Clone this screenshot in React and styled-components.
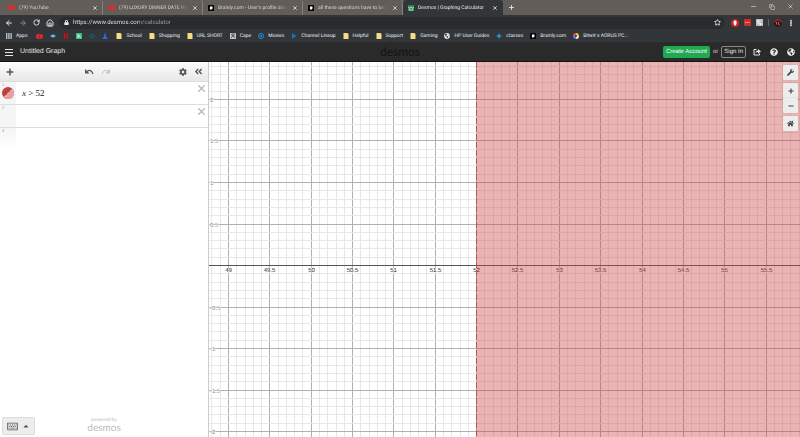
import { useState, useRef, useLayoutEffect } from 'react';
import styled, { createGlobalStyle } from 'styled-components';
import { FaYoutube, FaWrench, FaHome, FaCog, FaLock, FaPlus, FaMinus, FaGlobeAmericas, FaQuestionCircle, FaCaretUp, FaAngleDoubleLeft, FaRegKeyboard } from 'react-icons/fa';
import { ArrowLeft, ArrowRight, RotateCw, House, Star, X, Plus, Minus, Copy, EllipsisVertical } from 'lucide-react';

const tabs = [
    { icon: "youtube", title: "(79) YouTube" },
    { icon: "youtube", title: "(79) LUXURY DINNER DATE NIGH" },
    { icon: "brainly", title: "Brainly.com - User's profile diana" },
    { icon: "brainly", title: "all these questions have to be an" },
    { icon: "desmos", title: "Desmos | Graphing Calculator", active: true },
]

const shortcuts = ["youtube", "eye", "netflix", "hulu", "cloud", "person"]

const bookmarks = [
    { icon: "folder", title: "School" },
    { icon: "folder", title: "Shopping" },
    { icon: "folder", title: "URL SHORT" },
    { icon: "cape", title: "Cape" },
    { icon: "movies", title: "Movies" },
    { icon: "channel", title: "Channel Lineup" },
    { icon: "folder", title: "Helpful" },
    { icon: "folder", title: "Support" },
    { icon: "folder", title: "Gaming" },
    { icon: "globe", title: "HP User Guides" },
    { icon: "classes", title: "classes" },
    { icon: "brainly", title: "Brainly.com" },
    { icon: "google", title: "Bitwit x AORUS PC..." },
]

function SiteIcon({ name }) {
    if (name === "youtube") {
        return <FaYoutube size={7} color="#e8282b" />
    }
    if (name === "globe") {
        return <FaGlobeAmericas size={6} color="#f1f1f1" />
    }
    return (
        <svg width="6" height="6" viewBox="0 0 12 12" aria-hidden="true">
            {name === "brainly" && <>
                <rect width="12" height="12" fill="#050505" />
                <path d="M4 3h5v4L7 9H4z" fill="#fff" />
            </>}
            {name === "desmos" && <>
                <rect width="12" height="12" rx="2" fill="#2f8a55" />
                <path d="M0 3l3 4 3-3 3 3 3-4M1 10h10" fill="none" stroke="#dff5e6" strokeWidth="1.6" />
            </>}
            {name === "folder" && <path d="M1 0h8l2 2v10H1z" fill="#f6dc86" />}
            {name === "eye" && <>
                <path d="M0 6Q6-1 12 6 6 13 0 6z" fill="#2d8fd8" />
                <path d="M3 6h6" stroke="#b9e0ff" strokeWidth="2" />
            </>}
            {name === "netflix" && <path d="M3 12V0l6 12V0" fill="none" stroke="#b8121b" strokeWidth="2.4" />}
            {name === "hulu" && <>
                <rect width="12" height="12" fill="#3dbb85" />
                <path d="M4 2v8M4 6q4-2 4 1v3" fill="none" stroke="#fff" strokeWidth="1.6" />
            </>}
            {name === "cloud" && <path d="M3 9Q0 8 1 5.500 2 4 3.500 4 6 0 9 3.500 12 4 11 7 10.500 9 9 9M6 5v6M4 9l2 2 2-2" fill="none" stroke="#1d7099" strokeWidth="1.4" />}
            {name === "person" && <>
                <circle cx="6" cy="3" r="2.500" fill="#2859c8" />
                <path d="M1 12q0-4 3-4V5h4v3q3 0 3 4z" fill="#2f6ce0" />
            </>}
            {name === "cape" && <>
                <rect width="12" height="12" fill="#c9c9c9" />
                <path d="M2 2h8M4 4h4v3H4zM2 10l2-2M10 10L8 8" fill="none" stroke="#333" strokeWidth="1.4" />
            </>}
            {name === "movies" && <>
                <circle cx="6" cy="6" r="5" fill="none" stroke="#1993dd" strokeWidth="2" />
                <circle cx="6" cy="6" r="2" fill="#1993dd" />
            </>}
            {name === "channel" && <path d="M2 0l9 6-9 6z" fill="#1c6fb5" />}
            {name === "classes" && <path d="M6 0l2 4 4 2-4 2-2 4-2-4-4-2 4-2z" fill="#2a93d5" />}
            {name === "google" && <g fill="none" strokeWidth="4">
                <path d="M2 6a4 4 0 0 1 4-4" stroke="#e9503e" />
                <path d="M6 2a4 4 0 0 1 4 4" stroke="#f5c141" />
                <path d="M10 6a4 4 0 0 1-4 4" stroke="#eee" />
                <path d="M6 10a4 4 0 0 1-4-4" stroke="#4285f4" />
            </g>}
        </svg>
    )
}

function TabStrip() {
    return (
        <Strip>
            {tabs.map( (tab, i) => (
                <Tab key={i} $active={tab.active}>
                    <SiteIcon name={tab.icon} />
                    <TabTitle $active={tab.active}>{tab.title}</TabTitle>
                    <IconButton aria-label="Close tab"><X size={6} strokeWidth={3} /></IconButton>
                </Tab>
            ))}
            <NewTab aria-label="New tab"><Plus size={7} strokeWidth={3} /></NewTab>
            <WindowButtons>
                <IconButton aria-label="Minimize"><Minus size={7} /></IconButton>
                <IconButton aria-label="Restore"><Copy size={6} /></IconButton>
                <IconButton aria-label="Close"><X size={7} /></IconButton>
            </WindowButtons>
        </Strip>
    )
}

function AddressBar() {
    return (
        <Address>
            <Navigation>
                <IconButton aria-label="Back"><ArrowLeft size={8} strokeWidth={3} /></IconButton>
                <IconButton aria-label="Forward" $dim><ArrowRight size={8} strokeWidth={3} /></IconButton>
                <IconButton aria-label="Reload"><RotateCw size={7} strokeWidth={3} /></IconButton>
                <IconButton aria-label="Home"><House size={8} strokeWidth={3} /></IconButton>
            </Navigation>
            <Omnibox>
                <FaLock size={5} />
                <UrlInput aria-label="Address" defaultValue="https://www.desmos.com/calculator" />
                <IconButton aria-label="Bookmark"><Star size={7} strokeWidth={3} /></IconButton>
            </Omnibox>
            <Extensions>
                <svg width="8" height="8" viewBox="0 0 16 16" aria-hidden="true">
                    <path d="M5 0h6l5 5v6l-5 5H5l-5-5V5z" fill="#d8231d" />
                    <path d="M5 8V5h1V3h2v-.5h1V4h2v6l-2 3H7z" fill="#fff" />
                </svg>
                <svg width="7" height="7" viewBox="0 0 14 14" aria-hidden="true">
                    <rect width="14" height="14" fill="#ce2d28" />
                    <path d="M2 7h10" stroke="#f1a09d" strokeWidth="2" strokeDasharray="2.500 1" />
                </svg>
                <svg width="7" height="7" viewBox="0 0 14 14" aria-hidden="true">
                    <rect width="14" height="14" fill="#b9bbbd" />
                    <path d="M2 4h7M2 8h4" stroke="#fff" strokeWidth="2" />
                    <path d="M7 7l5 3-5 3z" fill="#fff" />
                </svg>
                <Divider />
                <svg width="8" height="8" viewBox="0 0 16 16" aria-hidden="true">
                    <circle cx="8" cy="8" r="8" fill="#3b1215" />
                    <path d="M1 6q7-9 14 0" fill="none" stroke="#a62626" strokeWidth="3" />
                    <path d="M5 6v5M9 6v5l3 2" stroke="#b98b82" strokeWidth="1.500" fill="none" />
                </svg>
                <IconButton aria-label="Menu"><EllipsisVertical size={8} strokeWidth={4} /></IconButton>
            </Extensions>
        </Address>
    )
}

function Bookmarks() {
    return (
        <BookmarkBar>
            <Bookmark href="#">
                <svg width="6" height="6" viewBox="0 0 6 6" aria-hidden="true">
                    <path d="M0 1h6M0 3h6M0 5h6" stroke="#e8eaed" strokeWidth="1.300" strokeDasharray="1.400 .8" />
                </svg>
                Apps
            </Bookmark>
            <Shortcuts>
                {shortcuts.map( name => <Bookmark key={name} href="#" aria-label={name}><SiteIcon name={name} /></Bookmark>)}
            </Shortcuts>
            {bookmarks.map( item => (
                <Bookmark key={item.title} href="#">
                    <SiteIcon name={item.icon} />
                    {item.title}
                </Bookmark>
            ))}
        </BookmarkBar>
    )
}

function Header() {
    return (
        <HeaderBar>
            <HeaderSide>
                <IconButton aria-label="Open menu">
                    <svg width="8" height="8" viewBox="0 0 8 8">
                        <path d="M0 1.500h8M0 4.500h8M0 7.500h8" stroke="#e6e6e6" strokeWidth="1" />
                    </svg>
                </IconButton>
                <GraphTitle>Untitled Graph</GraphTitle>
            </HeaderSide>
            <Logo>desmos</Logo>
            <HeaderSide $end>
                <CreateAccount>Create Account</CreateAccount>
                <Or>or</Or>
                <SignIn>Sign In</SignIn>
                <HeaderIcons>
                    <IconButton aria-label="Share">
                        <svg width="8" height="8" viewBox="0 0 16 16">
                            <path d="M7 3H2v11h11v-3" fill="none" stroke="#e6e6e6" strokeWidth="2" />
                            <path d="M5 10q0-5 5-5V2l6 5-6 4V8q-3 0-5 2z" fill="#e6e6e6" />
                        </svg>
                    </IconButton>
                    <IconButton aria-label="Help"><FaQuestionCircle size={8} /></IconButton>
                    <IconButton aria-label="Language"><FaGlobeAmericas size={8} /></IconButton>
                </HeaderIcons>
            </HeaderSide>
        </HeaderBar>
    )
}

function Expressions() {
    return (
        <Panel>
            <PanelBar>
                <ToolButton aria-label="Add item"><FaPlus size={8} /></ToolButton>
                <History>
                    <ToolButton aria-label="Undo">
                        <svg width="9" height="8" viewBox="0 0 18 16">
                            <path d="M4 7Q12 1 16 12" fill="none" stroke="#555" strokeWidth="2.500" />
                            <path d="M0 2v9h9z" fill="#555" />
                        </svg>
                    </ToolButton>
                    <ToolButton aria-label="Redo">
                        <svg width="9" height="8" viewBox="0 0 18 16">
                            <path d="M14 7Q6 1 2 12" fill="none" stroke="#c4c4c4" strokeWidth="2" />
                            <path d="M18 2v9H9z" fill="#c4c4c4" />
                        </svg>
                    </ToolButton>
                </History>
                <ToolGroup>
                    <ToolButton aria-label="Edit list"><FaCog size={8} /></ToolButton>
                    <ToolButton aria-label="Hide list"><FaAngleDoubleLeft size={9} /></ToolButton>
                </ToolGroup>
            </PanelBar>
            <Row>
                <RowNumber>
                    1
                    <svg width="12" height="12" viewBox="0 0 24 24" aria-hidden="true">
                        <circle cx="12" cy="12" r="12" fill="#c0403d" />
                        <path d="M21 4A12 12 0 0 1 4 21z" fill="#e3a09e" />
                        <path d="M5 20L20 5" stroke="#fff" strokeWidth="2" strokeDasharray="5 3" />
                    </svg>
                </RowNumber>
                <Expression>
                    <MathText><i>x</i> &gt; 52</MathText>
                    <MathInput aria-label="Expression 1" />
                </Expression>
                <RemoveButton aria-label="Remove expression 1"><X size={11} strokeWidth={3} /></RemoveButton>
            </Row>
            <Row>
                <RowNumber>2</RowNumber>
                <Expression>
                    <MathInput aria-label="Expression 2" />
                </Expression>
                <RemoveButton aria-label="Remove expression 2"><X size={11} strokeWidth={3} /></RemoveButton>
            </Row>
            <Row $last>
                <RowNumber $last>3</RowNumber>
            </Row>
            <PanelFooter>
                <KeyboardButton aria-label="Show keyboard">
                    <FaRegKeyboard size={11} />
                    <FaCaretUp size={8} />
                </KeyboardButton>
                <PoweredBy>
                    powered by
                    <strong>desmos</strong>
                </PoweredBy>
            </PanelFooter>
        </Panel>
    )
}

// pixels for 0.1 units, every fifth line is a major one
const STEP_X = 8.27
const STEP_Y = 8.3
const AXIS_Y = 203
const LEFT_X = 19
const BOUNDARY = 52

const toX = value => Math.round(LEFT_X + (value - 49) * 10 * STEP_X) + 0.5
const toY = value => Math.round(AXIS_Y - value * 10 * STEP_Y) + 0.5

function range(from, to) {
    const list = []
    for (let i = Math.ceil(from); i <= to; i++) {
        list.push(i)
    }
    return list
}

function Graph() {
    const paper = useRef(null)
    const [size, setSize] = useState({ width: 0, height: 0 })

    useLayoutEffect(() => {
        function measure() {
            setSize({ width: paper.current.clientWidth, height: paper.current.clientHeight })
        }
        measure()
        window.addEventListener("resize", measure)
        return () => window.removeEventListener("resize", measure)
    },[])

    const columns = range(490 - LEFT_X / STEP_X, 490 + (size.width - LEFT_X) / STEP_X)
    const rows = range((AXIS_Y - size.height) / STEP_Y, AXIS_Y / STEP_Y)
    const xLabels = columns.filter( n => n % 5 === 0)
    const yLabels = rows.filter( n => n % 5 === 0 && n !== 0)

    return (
        <GraphPaper ref={paper}>
            <Plot role="img" aria-label="Graph of x > 52">
                {columns.map( n => <line key={n} x1={toX(n / 10)} x2={toX(n / 10)} y1="0" y2="100%" stroke={n % 5 === 0 ? "#b0b0b0" : "#e8e8e8"} />)}
                {rows.map( n => <line key={n} x1="0" x2="100%" y1={toY(n / 10)} y2={toY(n / 10)} stroke={n % 5 === 0 ? "#b0b0b0" : "#e8e8e8"} />)}
                <line x1="0" x2="100%" y1={toY(0)} y2={toY(0)} stroke="#555" />
                {xLabels.map( n => <XLabel key={n} x={toX(n / 10)} y={AXIS_Y + 7}>{n / 10}</XLabel>)}
                {yLabels.map( n => <YLabel key={n} x="1" y={toY(n / 10) + 2}>{n / 10}</YLabel>)}
                <rect x={toX(BOUNDARY)} y="0" width="100%" height="100%" fill="#c74440" fillOpacity=".4" />
                <line x1={toX(BOUNDARY)} x2={toX(BOUNDARY)} y1="0" y2="100%" stroke="#b9504d" strokeDasharray="6 2" />
            </Plot>
            <GraphTools>
                <GraphButton aria-label="Graph settings"><FaWrench size={7} /></GraphButton>
                <ZoomButtons>
                    <GraphButton aria-label="Zoom in"><FaPlus size={6} /></GraphButton>
                    <GraphButton aria-label="Zoom out"><FaMinus size={6} /></GraphButton>
                </ZoomButtons>
                <GraphButton aria-label="Default viewport"><FaHome size={7} /></GraphButton>
            </GraphTools>
        </GraphPaper>
    )
}

export default function App() {
    return (
        <>
            <GlobalStyle />
            <Page>
                <TabStrip />
                <AddressBar />
                <Bookmarks />
                <Header />
                <Main>
                    <Expressions />
                    <Graph />
                </Main>
            </Page>
        </>
    )
}

const GlobalStyle = createGlobalStyle`
    * {
        box-sizing: border-box;
    }
    body {
        margin: 0;
        font-family: "Liberation Sans", Arial, sans-serif;
        text-rendering: geometricPrecision;
    }
    button, input {
        font-family: inherit;
        text-rendering: inherit;
        margin: 0;
        padding: 0;
        border: none;
        outline: none;
        background: none;
    }
    svg {
        flex-shrink: 0;
    }
`

const Page = styled.div`
    height: 100vh;
    display: flex;
    flex-direction: column;
    overflow: hidden;
`

const IconButton = styled.button`
    display: flex;
    align-items: center;
    justify-content: center;
    flex-shrink: 0;
    color: ${props => props.$dim ? "#85888b" : "#e8eaed"};
`

const Strip = styled.div`
    height: 15px;
    display: flex;
    flex-shrink: 0;
    padding-left: 3px;
    background-color: #625d59;
    font-family: Roboto, sans-serif;
`

const Tab = styled.div`
    width: 100px;
    display: flex;
    align-items: center;
    gap: 4px;
    padding: 0 4px 0 5px;
    border-radius: 3px 3px 0 0;
    border-right: 1px solid ${props => props.$active ? "transparent" : "#86817d"};
    background-color: ${props => props.$active ? "#323639" : "transparent"};
`

const TabTitle = styled.span`
    flex: 1;
    min-width: 0;
    overflow: hidden;
    white-space: nowrap;
    font-size: 5px;
    line-height: 10px;
    color: ${props => props.$active ? "#e8eaed" : "#d5d2cf"};
    mask-image: linear-gradient(90deg, #000 85%, ${props => props.$active ? "#000" : "transparent"});
`

const NewTab = styled(IconButton)`
    width: 16px;
`

const WindowButtons = styled.div`
    display: flex;
    align-items: center;
    gap: 12px;
    margin-left: auto;
    padding: 0 6px 2px 0;
`

const Address = styled.div`
    height: 15px;
    display: flex;
    align-items: center;
    flex-shrink: 0;
    padding: 0 5px;
    background-color: #323639;
`

const Navigation = styled.div`
    display: flex;
    align-items: center;
    gap: 6px;
    width: 54px;
`

const Omnibox = styled.div`
    flex: 1;
    height: 12px;
    display: flex;
    align-items: center;
    gap: 4px;
    padding: 0 4px 0 5px;
    border-radius: 6px;
    background-color: #282c2f;
    color: #e8eaed;
`

const UrlInput = styled.input`
    flex: 1;
    min-width: 0;
    font-family: Roboto, sans-serif;
    font-size: 6px;
    line-height: 10px;
    color: #e8eaed;
    background-image: linear-gradient(90deg, #f1f3f4 66px, #9aa0a6 66px);
    background-clip: text;
    -webkit-text-fill-color: transparent;
`

const Extensions = styled.div`
    display: flex;
    align-items: center;
    gap: 5px;
    padding-left: 6px;
`

const Divider = styled.div`
    width: 1px;
    height: 7px;
    background-color: #5f6368;
`

const BookmarkBar = styled.nav`
    height: 12px;
    display: flex;
    align-items: center;
    gap: 7px;
    flex-shrink: 0;
    padding: 0 6px;
    background-color: #323639;
    font-family: Roboto, sans-serif;
`

const Shortcuts = styled.div`
    display: flex;
    gap: 7px;
    padding: 0 1px 0 2px;
`

const Bookmark = styled.a`
    display: flex;
    align-items: center;
    gap: 4px;
    font-size: 5px;
    line-height: 10px;
    white-space: nowrap;
    text-decoration: none;
    color: #e8eaed;
`

const HeaderBar = styled.header`
    height: 20px;
    display: flex;
    align-items: center;
    flex-shrink: 0;
    padding: 0 5px;
    background-color: #2a2a2a;
    border-bottom: 1px solid #171214;
`

const HeaderSide = styled.div`
    flex: 1;
    display: flex;
    align-items: center;
    justify-content: ${props => props.$end ? "flex-end" : "flex-start"};
    gap: ${props => props.$end ? "3px" : "7px"};
`

const GraphTitle = styled.h1`
    margin: 0;
    font-size: 7px;
    line-height: 10px;
    font-weight: 400;
    color: #e6e6e6;
`

const Logo = styled.div`
    font-family: Lato, sans-serif;
    font-size: 12px;
    line-height: 16px;
    color: #131313;
`

const CreateAccount = styled.button`
    height: 12px;
    padding: 0 3px;
    border-radius: 2px;
    background-color: #1fa952;
    font-size: 6px;
    white-space: nowrap;
    color: #fff;
`

const Or = styled.span`
    font-size: 6px;
    color: #ccc;
`

const SignIn = styled.button`
    height: 12px;
    padding: 0 2px;
    border: 1px solid #8a8a8a;
    border-radius: 2px;
    font-size: 6px;
    white-space: nowrap;
    color: #e6e6e6;
`

const HeaderIcons = styled.div`
    display: flex;
    gap: 9px;
    padding-left: 4px;
`

const Main = styled.main`
    flex: 1;
    min-height: 0;
    display: flex;
`

const Panel = styled.section`
    width: 209px;
    display: flex;
    flex-direction: column;
    flex-shrink: 0;
    background-color: #fff;
    border-right: 1px solid #ccc;
`

const PanelBar = styled.div`
    height: 20px;
    display: flex;
    align-items: center;
    justify-content: space-between;
    flex-shrink: 0;
    padding: 0 5px 0 6px;
    background-image: linear-gradient(#fcfcfc, #e8e8e8);
    border-bottom: 1px solid #dcdcdc;
`

const ToolButton = styled(IconButton)`
    color: #555;
`

const ToolGroup = styled.div`
    display: flex;
    gap: 7px;
`

const History = styled(ToolGroup)`
    padding-left: 2px;
`

const Row = styled.div`
    height: 23px;
    display: flex;
    flex-shrink: 0;
    border-bottom: 1px solid ${props => props.$last ? "transparent" : "#dedede"};
`

const RowNumber = styled.div`
    width: 16px;
    display: flex;
    flex-direction: column;
    padding: 1px 2px;
    font-size: 4px;
    line-height: 4px;
    color: #999;
    background: ${props => props.$last ? "linear-gradient(#f5f5f5, #fff)" : "#f5f5f5"};
`

const Expression = styled.label`
    flex: 1;
    display: flex;
    align-items: center;
    padding-left: 6px;
`

const MathText = styled.span`
    font-family: "Liberation Serif", serif;
    font-size: 9px;
    line-height: 12px;
    white-space: nowrap;
    color: #222;
`

const MathInput = styled.input`
    flex: 1;
    min-width: 0;
    font-size: 9px;
    line-height: 12px;
`

const RemoveButton = styled(IconButton)`
    align-self: flex-start;
    padding: 1px;
    color: #b9b9b9;
`

const PanelFooter = styled.div`
    display: grid;
    grid-template-columns: 1fr auto 1fr;
    align-items: center;
    margin-top: auto;
    padding: 2px;
`

const KeyboardButton = styled.button`
    width: 33px;
    height: 18px;
    display: flex;
    align-items: center;
    justify-content: center;
    gap: 4px;
    border: 1px solid #dcdcdc;
    border-radius: 2px;
    background-color: #ededed;
    color: #555;
`

const PoweredBy = styled.div`
    display: flex;
    flex-direction: column;
    align-items: center;
    padding-bottom: 2px;
    font-family: Lato, sans-serif;
    font-size: 5px;
    line-height: 6px;
    color: #bbb;

strong{
    font-size: 10px;
    line-height: 10px;
    font-weight: 400;
}
`

const GraphPaper = styled.section`
    flex: 1;
    min-width: 0;
    position: relative;
    overflow: hidden;
    background-color: #fff;
`

const Plot = styled.svg`
    display: block;
    width: 100%;
    height: 100%;
`

const XLabel = styled.text`
    font-size: 6px;
    text-anchor: middle;
    fill: #222;
    stroke: #fff;
    stroke-width: 1px;
    paint-order: stroke;
`

const YLabel = styled.text`
    font-size: 6px;
    fill: #8c8c8c;
    stroke: #fff;
    stroke-width: 1px;
    paint-order: stroke;
`

/* floats over the graph paper */
const GraphTools = styled.div`
    position: absolute;
    top: 3px;
    right: 2px;
    display: flex;
    flex-direction: column;
    gap: 3px;
`

const GraphButton = styled.button`
    width: 15px;
    height: 15px;
    display: flex;
    align-items: center;
    justify-content: center;
    border-radius: 1px;
    background-color: #ededed;
    box-shadow: 0 0 1px #999;
    color: #444;
`

const ZoomButtons = styled.div`
    display: flex;
    flex-direction: column;
`
